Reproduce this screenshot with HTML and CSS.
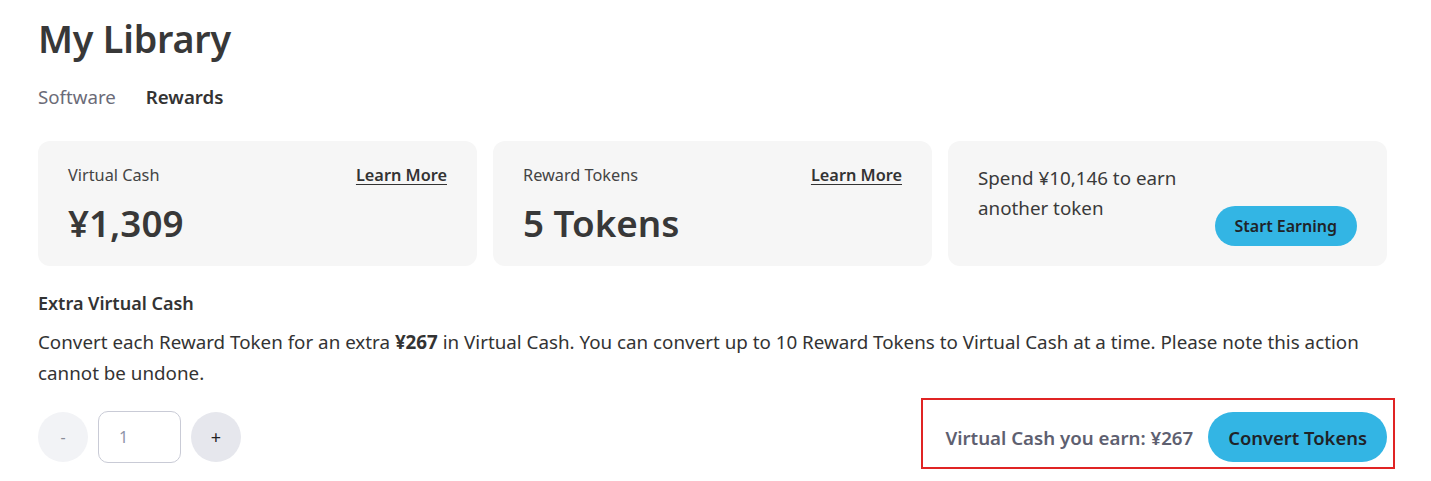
FILE: index.html
```html
<!DOCTYPE html>
<html>
<head>
<meta charset="utf-8">
<link rel="stylesheet" href="styles.css">
</head>
<body>
<div class="page">
  <h1 class="title">My Library</h1>
  <nav class="tabs">
    <span class="tab">Software</span>
    <span class="tab active">Rewards</span>
  </nav>
  <div class="cards">
    <div class="card">
      <div class="card-head">
        <span class="label">Virtual Cash</span>
        <a class="learn">Learn More</a>
      </div>
      <div class="value">¥1,309</div>
    </div>
    <div class="card">
      <div class="card-head">
        <span class="label">Reward Tokens</span>
        <a class="learn">Learn More</a>
      </div>
      <div class="value">5 Tokens</div>
    </div>
    <div class="card card-earn">
      <p class="earn-text">Spend ¥10,146 to earn another token</p>
      <button class="btn btn-small">Start Earning</button>
    </div>
  </div>
  <h2 class="section-title">Extra Virtual Cash</h2>
  <p class="desc">Convert each Reward Token for an extra <b>¥267</b> in Virtual Cash. You can convert up to 10 Reward Tokens to Virtual Cash at a time. Please note this action cannot be undone.</p>
  <div class="actions">
    <div class="stepper">
      <button class="step minus">-</button>
      <div class="qty">1</div>
      <button class="step plus">+</button>
    </div>
    <div class="convert">
      <span class="earn-amount">Virtual Cash you earn: ¥267</span>
      <button class="btn btn-large">Convert Tokens</button>
    </div>
  </div>
</div>
</body>
</html>
```
FILE: styles.css
```css
* { box-sizing: border-box; }
body {
  margin: 0;
  background: #fff;
  font-family: "Noto Sans", "Open Sans", sans-serif;
  color: #333;
}
.page {
  width: 1349px;
  margin-left: 38px;
  padding-top: 12px;
  padding-bottom: 12px;
}
.title {
  margin: 0;
  font-size: 37.7px;
  line-height: 54px;
  font-weight: 600;
  color: #383838;
  letter-spacing: -0.2px;
}
.tabs {
  display: flex;
  gap: 30px;
  margin-top: 18px;
  font-size: 18.7px;
  line-height: 26px;
}
.tab { color: #6b6b78; }
.tab.active { color: #333; font-weight: 600; }
.cards {
  display: flex;
  gap: 16px;
  margin-top: 31px;
}
.card {
  flex: 1;
  height: 125px;
  background: #f6f6f6;
  border-radius: 12px;
  padding: 22px 30px 0 30px;
}
.card-head {
  display: flex;
  justify-content: space-between;
  align-items: center;
  font-size: 16.3px;
  line-height: 24px;
}
.label { color: #444; }
.learn {
  color: #333;
  font-weight: 600;
  text-decoration: underline;
  text-underline-offset: 3px;
}
.value {
  margin-top: 11px;
  font-size: 36.8px;
  line-height: 50px;
  font-weight: 600;
  color: #383838;
}
.card-earn {
  display: flex;
  justify-content: space-between;
  align-items: flex-end;
  padding: 22px 30px 20px 30px;
}
.earn-text {
  margin: 0;
  align-self: flex-start;
  width: 230px;
  font-size: 18.8px;
  line-height: 30px;
  color: #3a3a3a;
}
.btn {
  border: none;
  background: #33b5e4;
  color: #1f2328;
  font-family: inherit;
  font-weight: 600;
}
.btn-small {
  height: 40px;
  padding: 0 20px;
  border-radius: 20px;
  font-size: 16px;
}
.section-title {
  margin: 24px 0 0 0;
  font-size: 18px;
  line-height: 26px;
  font-weight: 600;
  color: #333;
}
.desc {
  margin: 11px 0 0 0;
  font-size: 18.8px;
  line-height: 31px;
  color: #333;
}
.desc b { font-weight: 700; }
.actions {
  display: flex;
  justify-content: space-between;
  align-items: center;
  margin-top: 22px;
}
.stepper {
  display: flex;
  align-items: center;
  gap: 10px;
}
.step {
  width: 50px;
  height: 50px;
  border-radius: 50%;
  border: none;
  font-family: inherit;
  font-size: 16px;
}
.minus { background: #f2f3f6; color: #8a8d98; }
.plus { background: #e6e7ed; color: #222; font-size: 18px; }
.qty {
  width: 83px;
  height: 52px;
  border: 1px solid #c9cbd6;
  border-radius: 10px;
  padding-left: 20px;
  display: flex;
  align-items: center;
  font-size: 16px;
  color: #8d94a8;
}
.convert {
  position: relative;
  display: flex;
  align-items: center;
  gap: 15px;
}
.convert::after {
  content: "";
  position: absolute;
  top: -14px;
  right: -8px;
  bottom: -7px;
  left: -24px;
  border: 2px solid #e02424;
  pointer-events: none;
}
.earn-amount {
  font-size: 18.7px;
  font-weight: 600;
  color: #5e6070;
}
.btn-large {
  height: 50px;
  padding: 0 20px;
  border-radius: 25px;
  font-size: 18.4px;
}
```
